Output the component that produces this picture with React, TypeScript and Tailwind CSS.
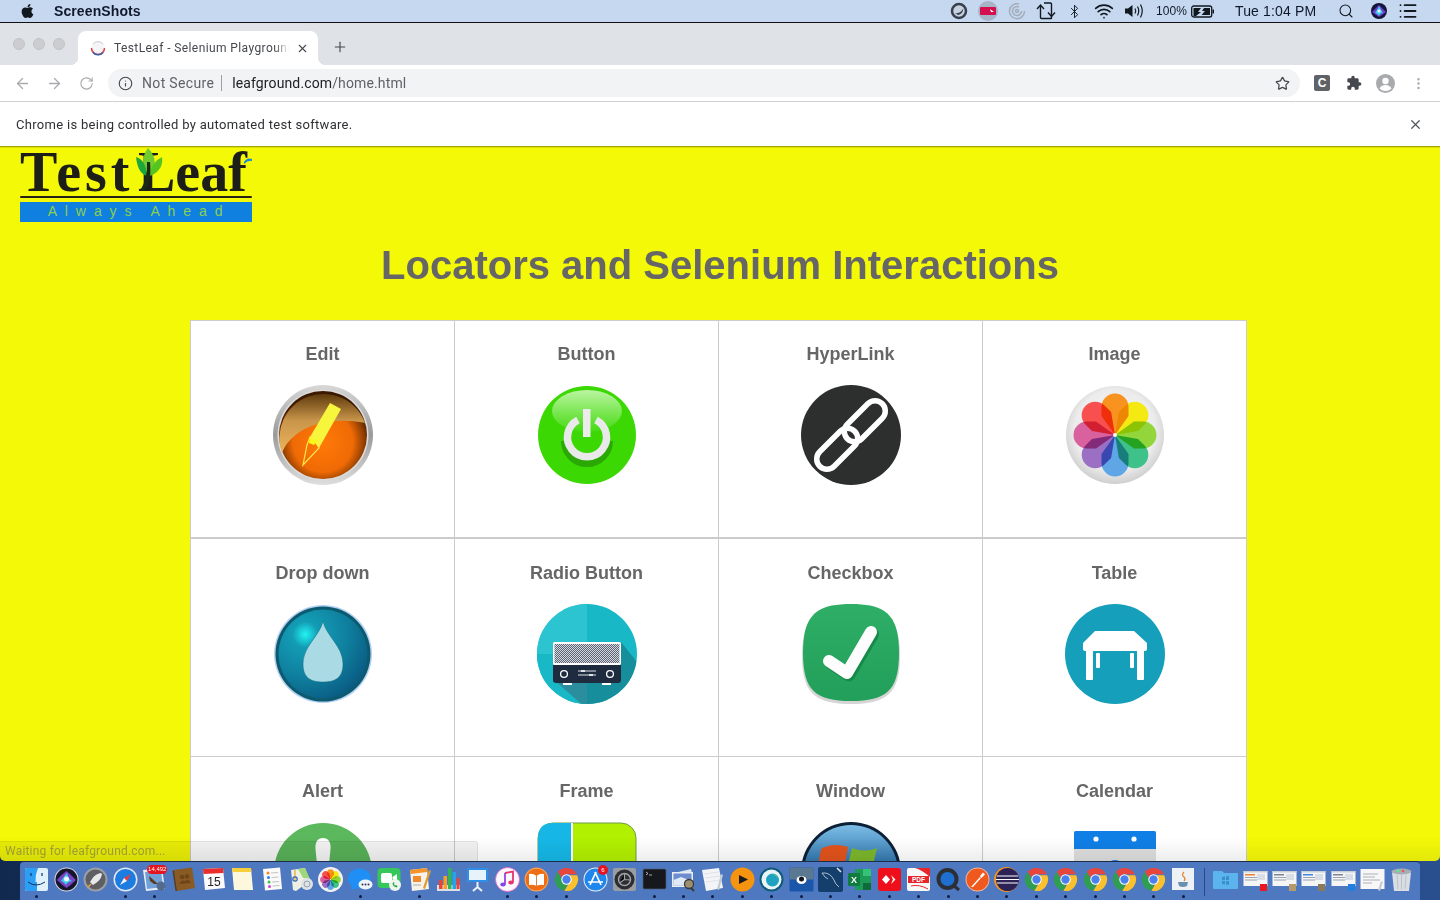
import React from "react";
import { ArrowLeft, ArrowRight, RotateCw, Info, Star, X, Plus, Search, Bluetooth, Wifi, EllipsisVertical, List } from "lucide-react";
import { FaApple } from "react-icons/fa";

const Petals = () => {
  const colors = ["#f7931e", "#f4e912", "#93d63c", "#3fc18a", "#5ea6e6", "#9a6fc4", "#d9619e", "#f7504f"];
  return (
    <g className="isolate">
      {colors.map((c, i) => (
        <path key={i} className="mix-blend-multiply" fill={c} transform={`rotate(${i * 45} 50 50)`} d="M50 50L36.500 31V22A13.500 13.500 0 0 1 63.500 22V31Z" />
      ))}
      <circle cx="50" cy="50" r="2" fill="#fff" />
    </g>
  );
};

const EditIcon = () => (
  <svg viewBox="0 0 100 100" className="w-[100px] h-[100px]">
    <defs>
      <linearGradient id="e1" x1="0" y1="0" x2="0" y2="1"><stop offset="0" stopColor="#d8d8d8" /><stop offset=".5" stopColor="#9a9a9a" /><stop offset="1" stopColor="#dedede" /></linearGradient>
      <radialGradient id="e2" cx=".5" cy=".58" r=".55"><stop offset="0" stopColor="#ff7a08" /><stop offset=".62" stopColor="#f06a05" /><stop offset=".86" stopColor="#8c3d02" /><stop offset="1" stopColor="#3c1a02" /></radialGradient>
      <linearGradient id="e3" x1="0" y1="0" x2="0" y2="1"><stop offset="0" stopColor="#5e3a0c" /><stop offset=".45" stopColor="#c8954a" /><stop offset="1" stopColor="#eeb45c" /></linearGradient>
    </defs>
    <circle cx="50" cy="50" r="50" fill="url(#e1)" />
    <circle cx="50" cy="50" r="45.500" fill="#dcdcdc" />
    <circle cx="50" cy="50" r="44" fill="url(#e2)" />
    <path d="M9 68C18 44 52 30 92 38A44 44 0 0 0 9 68Z" fill="url(#e3)" />
    <path d="M57 18L68 24L46 63L37 52Z" fill="#f7f53c" />
    <path d="M37 52L43 57L46 63L30 80L34 60Z" fill="none" stroke="#ffe94a" strokeWidth="1.200" />
    <path d="M37 52L42 56L46 52L41 60L36 58Z" fill="#f9fb10" />
  </svg>
);
const PowerIcon = () => (
  <svg viewBox="0 0 100 100" className="w-[100px] h-[100px]">
    <defs><linearGradient id="p1" x1="0" y1="0" x2="0" y2="1"><stop offset="0" stopColor="#baf5a0" /><stop offset="1" stopColor="#44da10" /></linearGradient></defs>
    <circle cx="50" cy="50" r="49" fill="#3cd803" />
    <ellipse cx="50" cy="26" rx="35" ry="21" fill="url(#p1)" />
    <path d="M28 56A22 22 0 0 0 72 56" fill="none" stroke="#2aa803" strokeWidth="8" />
    <path d="M41 35A19.500 19.500 0 1 0 59 35" fill="none" stroke="#e9e9e9" strokeWidth="7.500" />
    <rect x="46" y="24" width="7.500" height="28" fill="#ececec" />
  </svg>
);
const LinkIcon = () => (
  <svg viewBox="0 0 100 100" className="w-[100px] h-[100px]">
    <circle cx="50" cy="50" r="50" fill="#2d2f2e" />
    <g fill="none" stroke="#fff" strokeWidth="5.500">
      <rect x="-24.750" y="-10.250" width="49.500" height="20.500" rx="10.250" transform="translate(63.800 36.200) rotate(-45)" />
      <rect x="-24.750" y="-10.250" width="49.500" height="20.500" rx="10.250" transform="translate(36.200 63.800) rotate(-45)" />
    </g>
  </svg>
);
const PhotosIcon = () => (
  <svg viewBox="0 0 100 100" className="w-[100px] h-[100px]">
    <defs><radialGradient id="ph" cx=".5" cy=".45" r=".55"><stop offset="0" stopColor="#f7f7f7" /><stop offset=".75" stopColor="#ececec" /><stop offset="1" stopColor="#cfcfcf" /></radialGradient></defs>
    <circle cx="50" cy="50" r="49" fill="url(#ph)" />
    <Petals />
  </svg>
);
const DropIcon = () => (
  <svg viewBox="0 0 100 100" className="w-[100px] h-[100px]">
    <defs><radialGradient id="d1" cx=".3" cy=".28" r=".8"><stop offset="0" stopColor="#22f3f2" /><stop offset=".18" stopColor="#139cb5" /><stop offset=".6" stopColor="#0f7f9e" /><stop offset="1" stopColor="#0a5a82" /></radialGradient></defs>
    <circle cx="50" cy="50" r="49" fill="#b4d0f6" />
    <circle cx="50" cy="50" r="47.500" fill="#0c5a6e" />
    <circle cx="50" cy="50" r="44.500" fill="url(#d1)" />
    <path d="M50 17C53 32 70 42 70 60C70 74 62 78 50 78C38 78 30 74 30 60C30 42 47 32 50 17Z" fill="#aadbe4" stroke="#0c6a80" strokeWidth=".5" />
  </svg>
);
const RadioIcon = () => (
  <svg viewBox="0 0 100 100" className="w-[100px] h-[100px]">
    <defs>
      <pattern id="r1" width="2" height="2" patternUnits="userSpaceOnUse"><rect width="2" height="2" fill="#d4d7dc" /><rect width="1" height="1" fill="#5d6475" /><rect x="1" y="1" width="1" height="1" fill="#5d6475" /></pattern>
      <clipPath id="r2"><circle cx="50" cy="50" r="50" /></clipPath>
    </defs>
    <g clipPath="url(#r2)">
      <rect width="100" height="100" fill="#18b8c6" />
      <rect width="50" height="100" fill="#2cc4d1" />
      <rect y="50" width="50" height="50" fill="#18b8c6" />
      <path d="M84 38L100 58V100H50V79Z" fill="#178e9c" />
      <path d="M16 75L50 105V79Z" fill="#2a8e9e" />
    </g>
    <rect x="16" y="38" width="68" height="23" rx="1.500" fill="#fff" />
    <rect x="17.500" y="40" width="65" height="19" fill="url(#r1)" />
    <path d="M16 61H84V76Q84 79 81 79H19Q16 79 16 76Z" fill="#1f2c40" />
    <circle cx="27" cy="70" r="3.400" fill="none" stroke="#fff" strokeWidth="1.300" />
    <circle cx="73" cy="70" r="3.400" fill="none" stroke="#fff" strokeWidth="1.300" />
    <path d="M41 67H59M41 71H59" stroke="#dfe3e8" strokeWidth="1" />
    <rect x="44" y="66" width="4" height="2" fill="#dfe3e8" /><rect x="52" y="70" width="4" height="2" fill="#dfe3e8" />
    <rect x="26" y="79" width="9" height="2" fill="#fff" /><rect x="65" y="79" width="9" height="2" fill="#fff" />
  </svg>
);
const CheckIcon = () => (
  <svg viewBox="0 0 100 100" className="w-[100px] h-[100px]">
    <defs><linearGradient id="c1" x1="0" y1="0" x2="0" y2="1"><stop offset="0" stopColor="#2eae66" /><stop offset="1" stopColor="#229f5a" /></linearGradient></defs>
    <path d="M50 3C85 3 99 14 99 52C99 90 85 100 50 100C15 100 1 90 1 52C1 14 15 3 50 3Z" fill="#d5d5d5" />
    <path d="M50 0C85 0 98 11 98 49C98 87 85 97 50 97C15 97 2 87 2 49C2 11 15 0 50 0Z" fill="url(#c1)" />
    <path d="M29 58L47 70L71 29" fill="none" stroke="#178a49" strokeWidth="12" strokeLinecap="round" strokeLinejoin="round" transform="translate(1 1.500)" />
    <path d="M28 57L46 69L70 28" fill="none" stroke="#fdfdfd" strokeWidth="12" strokeLinecap="round" strokeLinejoin="round" />
  </svg>
);
const TableIcon = () => (
  <svg viewBox="0 0 100 100" className="w-[100px] h-[100px]">
    <circle cx="50" cy="50" r="50" fill="#159fbb" />
    <path d="M30 27H69L82 39V45Q82 47 80 47H20Q18 47 18 45V39Z" fill="#fff" />
    <path d="M21 46H28V75Q28 76 27 76H22Q21 76 21 75ZM72 46H79V75Q79 76 78 76H73Q72 76 72 75Z" fill="#fff" />
    <rect x="31" y="49" width="4" height="15" rx="1" fill="#fff" /><rect x="65" y="49" width="4" height="15" rx="1" fill="#fff" />
  </svg>
);
const AlertIcon = () => (
  <svg viewBox="0 0 100 100" className="w-[100px] h-[100px]">
    <circle cx="50" cy="50" r="49" fill="#5cb85c" />
    <path d="M50 16C56 16 58 21 57.500 27L54 62H46L42.500 27C42 21 44 16 50 16Z" fill="#fff" />
  </svg>
);
const FrameIcon = () => (
  <svg viewBox="0 0 100 100" className="w-[100px] h-[100px]">
    <rect x="1" y="1" width="98" height="98" rx="15" fill="#b1f000" stroke="#6f9a4a" strokeWidth="1" />
    <path d="M16 1H34V99H16Q1 99 1 84V16Q1 1 16 1Z" fill="#16b7e6" />
    <rect x="34" y="1" width="2" height="98" fill="#fff" />
  </svg>
);
const WindowsIcon = () => (
  <svg viewBox="0 0 100 100" className="w-[100px] h-[100px]">
    <defs><linearGradient id="w1" x1="0" y1="0" x2="0" y2="1"><stop offset="0" stopColor="#7dbde6" /><stop offset=".4" stopColor="#2f75ad" /><stop offset="1" stopColor="#174a7c" /></linearGradient></defs>
    <circle cx="50" cy="50" r="50" fill="#0c1f35" />
    <circle cx="50" cy="50" r="47" fill="url(#w1)" />
    <path d="M20 27Q32 20 47 25L44 42Q30 37 17 44Z" fill="#e2531c" />
    <path d="M51 26Q64 31 76 26L72 43Q60 47 47 43Z" fill="#7cb62b" />
  </svg>
);
const CalendarIcon = () => (
  <svg viewBox="0 0 100 100" className="w-[100px] h-[100px]">
    <rect x="9" y="9" width="82" height="82" fill="#dedede" />
    <path d="M9 11Q9 9 11 9H89Q91 9 91 11V27H9Z" fill="#0f7fe6" />
    <circle cx="31" cy="17" r="2.600" fill="#fff" /><circle cx="69" cy="17" r="2.600" fill="#fff" />
    <path d="M38 46Q50 30 62 46Z" fill="#0f7fe6" />
  </svg>
);

const ChromeLogo = ({ size = 25 }: { size?: number }) => (
  <svg viewBox="0 0 24 24" width={size} height={size}>
    <path d="M12 1A11 11 0 0 1 22 7H12A5 5 0 0 0 7.300 10.300L3.800 4.600A11 11 0 0 1 12 1Z" fill="#e8453c" />
    <path d="M3.500 4.800L8.500 13.500A5 5 0 0 0 13 17L9.800 22.800A11 11 0 0 1 3.500 4.800Z" fill="#2f9e50" />
    <path d="M22.300 8A11 11 0 0 1 10 22.900L15.500 13.500A5 5 0 0 0 15 8Z" fill="#fbc02d" />
    <circle cx="12" cy="12" r="5" fill="#fff" /><circle cx="12" cy="12" r="4" fill="#4a80ee" />
  </svg>
);
const Dk = ({ children }: { children: React.ReactNode }) => <svg viewBox="0 0 25 25" width={25} height={25}>{children}</svg>;

type DockItem = { node: React.ReactNode; dot?: boolean };
const Thumb = ({ a, b }: { a: string; b: string }) => (
  <Dk>
    <rect x=".5" y="4" width="24" height="15" fill="#f5f5f5" />
    <rect x=".5" y="4" width="24" height="1.500" fill="#c9ced6" />
    <rect x="2" y="7" width="10" height="1.500" fill={a} /><rect x="2" y="10" width="15" height="1" fill="#9aa4b2" /><rect x="2" y="12.500" width="12" height="1" fill="#9aa4b2" /><rect x="14" y="7" width="8" height="6" fill="#d8dde6" />
    <rect x="17" y="17" width="7" height="7" fill={b} />
  </Dk>
);
const dock: DockItem[] = [
  { dot: true, node: <Dk><rect x="1" y="1" width="23" height="23" rx="2" fill="#dff1fc" /><path d="M3 1H14Q11 8 11.500 15H13V24H3Q1 24 1 22V3Q1 1 3 1Z" fill="#2a9ff5" /><path d="M4 15Q12 21 21 15" fill="none" stroke="#17335c" strokeWidth="1" /><path d="M7 6V9M18 6V9" stroke="#17335c" strokeWidth="1.200" /></Dk> },
  { node: <Dk><circle cx="12.500" cy="12.500" r="12" fill="#d5d7db" /><circle cx="12.500" cy="12.500" r="11" fill="#15152c" /><path d="M3 13Q8 7 12.500 4Q17 8 22 13Q17 18 12.500 21Q8 18 3 13Z" fill="#7a43c4" /><path d="M7 14Q11 8 13 6Q14 12 18 14Q13 15 12 18Q10 15 7 14Z" fill="#38d1e0" /><circle cx="12.500" cy="12" r="2.500" fill="#f0f4ff" /></Dk> },
  { node: <Dk><circle cx="12.500" cy="12.500" r="12" fill="#9b9ea3" /><circle cx="12.500" cy="12.500" r="10" fill="#5d5f63" /><path d="M18 6Q12 7 9 12L7 15L10 18L13 16Q18 13 19 7Z" fill="#e8e8ea" /><path d="M8 17L5 20" stroke="#f3a23c" strokeWidth="1.500" /></Dk> },
  { dot: true, node: <Dk><circle cx="12.500" cy="12.500" r="12" fill="#dfe8f5" /><circle cx="12.500" cy="12.500" r="10.500" fill="#1d7ce0" /><path d="M18 7L11 11L14 14Z" fill="#ef3b36" /><path d="M7 18L11 11L14 14Z" fill="#f3f3f3" /></Dk> },
  { dot: true, node: <div className="relative w-[25px] h-[25px]"><Dk><path d="M1 3L20 1L23 22L4 24Z" fill="#e8eff8" /><path d="M3 5L19 3L21 20L5 22Z" fill="#6fa0d8" /><path d="M7 9L16 17L12 17L8 14Z" fill="#5b3a1e" /><circle cx="19" cy="19" r="4.500" fill="#536a8c" /></Dk><span className="absolute left-[5px] top-[-2px] h-[9px] px-[1px] rounded-full bg-[#e6141e] text-white text-[6px] leading-[9px] font-['Liberation_Sans',sans-serif] whitespace-nowrap">14,492</span></div> },
  { node: <Dk><path d="M3 3L21 0.500L24 21L6 24Z" fill="#8a5a24" /><path d="M3 3L6 24L4.500 24L1.500 4Z" fill="#5f3c14" /><circle cx="11" cy="10" r="2.300" fill="#6e4518" /><circle cx="16" cy="9.500" r="2.300" fill="#6e4518" /><path d="M8 17Q11 12 14 14Q18 11 20 16Z" fill="#6e4518" /></Dk> },
  { node: <Dk><path d="M2 2L22 1L24 21L4 23Z" fill="#fbfbfb" /><path d="M2 2L22 1L22.500 6L2.500 7Z" fill="#ea2e2b" /><text x="13" y="19" textAnchor="middle" fontSize="12" fontFamily="'Liberation Sans',sans-serif" fill="#222">15</text></Dk> },
  { node: <Dk><path d="M2 1H21L23 23H4Z" fill="#fdf8dd" /><path d="M2 1H21L21.400 5H2.400Z" fill="#f7cf3a" /></Dk> },
  { node: <Dk><path d="M3 2L20 0.500L22 22L5 23.500Z" fill="#fafafa" /><circle cx="8" cy="6" r="1.500" fill="#f58a1f" /><circle cx="8.500" cy="10.500" r="1.500" fill="#2c7df0" /><circle cx="9" cy="15" r="1.500" fill="#3bc04f" /><circle cx="9.500" cy="19.500" r="1.500" fill="#d23fd0" /><path d="M11 6L18 5.500M11.500 10.500L18.500 10M12 15L19 14.500M12.500 19L19.500 18.500" stroke="#aaa" strokeWidth=".7" /></Dk> },
  { node: <Dk><path d="M2 3L16 1L21 14L7 24L4 23Z" fill="#eef0e4" /><path d="M9 2L16 1L21 12L14 11Z" fill="#9fd77a" /><path d="M6 3V14" stroke="#e9b93c" strokeWidth="1.500" /><circle cx="6" cy="12" r="2.200" fill="none" stroke="#2c62c4" strokeWidth="1.200" /><circle cx="18" cy="17" r="6" fill="#dfe3e8" /><circle cx="18" cy="17" r="3" fill="none" stroke="#98a1ad" strokeWidth="1" /></Dk> },
  { node: <svg viewBox="0 0 100 100" width={25} height={25}><circle cx="50" cy="50" r="50" fill="#f2f2f2" /><Petals /></svg> },
  { dot: true, node: <Dk><ellipse cx="11.500" cy="11.500" rx="11.500" ry="10" fill="#1f8ff5" /><path d="M4 18L3 23Q8 22 10 20Z" fill="#1f8ff5" /><ellipse cx="17.500" cy="17.500" rx="7" ry="5" fill="#eef3fa" /><circle cx="14.500" cy="17.500" r="1" fill="#335" /><circle cx="17.500" cy="17.500" r="1" fill="#335" /><circle cx="20.500" cy="17.500" r="1" fill="#335" /></Dk> },
  { node: <Dk><rect x="0.500" y="1" width="23" height="20" rx="4" fill="#35c75a" /><rect x="4" y="6" width="11" height="10" rx="2" fill="#fff" /><path d="M15.500 10L20 7V15L15.500 12Z" fill="#fff" /><circle cx="18" cy="18" r="6" fill="#eef4ee" /><path d="M15.500 16.500Q16 20 20 20.500L20.500 19L19 18L18 18.500L17 17.500L17.500 16L16.500 15Z" fill="#2da84d" /></Dk> },
  { dot: true, node: <Dk><path d="M3 3L20 1L22 22L5 24Z" fill="#f7f3ea" /><path d="M3 3L20 1L20.400 5L3.400 7Z" fill="#f4952a" /><rect x="6" y="9" width="8" height="6" fill="#ef8b2c" /><path d="M22 3L24 4L18 22L16 21Z" fill="#e39a2f" /><path d="M6 18H14" stroke="#aaa" strokeWidth="1" /></Dk> },
  { node: <Dk><rect x="1" y="18" width="23" height="6" fill="#dcdfe4" /><rect x="3" y="13" width="3.500" height="9" fill="#ef4136" /><rect x="7.500" y="9" width="3.500" height="13" fill="#f5a31f" /><rect x="12" y="1" width="3.500" height="21" fill="#2fb757" /><rect x="16.500" y="5" width="3.500" height="17" fill="#25a4e8" /><rect x="20.500" y="11" width="3" height="11" fill="#ef4136" /></Dk> },
  { node: <Dk><rect x="2" y="1" width="21" height="14" rx="1" fill="#2e8fe8" /><rect x="4" y="3" width="17" height="10" fill="#e8f2fb" /><path d="M12.500 15V21M8 24L12.500 20L17 24" stroke="#eef1f5" strokeWidth="2" fill="none" /></Dk> },
  { dot: true, node: <Dk><circle cx="12.500" cy="12.500" r="12" fill="#fbf7fa" /><circle cx="12.500" cy="12.500" r="12" fill="none" stroke="#e85ac0" strokeWidth=".8" /><path d="M10 6L18 4.500V15" stroke="#e9336e" strokeWidth="1.800" fill="none" /><path d="M10 6V17" stroke="#9a42e6" strokeWidth="1.800" /><ellipse cx="8" cy="17.500" rx="2.700" ry="2" fill="#7b49ea" /><ellipse cx="16" cy="15.500" rx="2.700" ry="2" fill="#e9336e" /></Dk> },
  { dot: true, node: <Dk><circle cx="12.500" cy="12.500" r="12" fill="#f8a35a" /><circle cx="12.500" cy="12.500" r="10.800" fill="#ef6d13" /><path d="M5 7Q9 6 12.500 9Q16 6 20 7V18Q16 17 12.500 19Q9 17 5 18Z" fill="#fff" /><path d="M12.500 9V19" stroke="#c6642a" strokeWidth=".8" /></Dk> },
  { dot: true, node: <ChromeLogo /> },
  { node: <div className="relative w-[25px] h-[25px]"><Dk><circle cx="12.500" cy="12.500" r="12" fill="#e8f1fb" /><circle cx="12.500" cy="12.500" r="11" fill="#1f86ee" /><path d="M13 5L7 18M12 5L18 18M5 15H20" stroke="#fff" strokeWidth="1.700" /></Dk><span className="absolute left-[15px] top-[-2px] w-[10px] h-[10px] rounded-full bg-[#e6141e] text-white text-[6px] leading-[10px] text-center font-['Liberation_Sans',sans-serif]">6</span></div> },
  { node: <Dk><rect x="1" y="1" width="23" height="23" rx="2" fill="#9a9da1" /><circle cx="12.500" cy="12.500" r="10" fill="#2c2d30" /><circle cx="12.500" cy="12.500" r="6" fill="none" stroke="#9fa2a6" strokeWidth="1.500" /><path d="M12.500 6.500V12.500L7.500 16M12.500 12.500L18 13" stroke="#9fa2a6" strokeWidth="1.200" /></Dk> },
  { dot: true, node: <Dk><rect x="1" y="2" width="23" height="20" rx="1.500" fill="#16181b" stroke="#4c5d77" strokeWidth=".7" /><path d="M4 5L6 6.500L4 8M7 8H10" stroke="#e8e8e8" strokeWidth=".7" fill="none" /></Dk> },
  { dot: true, node: <Dk><path d="M3 6L20 2L22 10L5 14Z" fill="#d9e7f2" /><rect x="1" y="5" width="21" height="15" fill="#eaeef3" /><rect x="2.500" y="6.500" width="18" height="12" fill="#6c8ed0" /><path d="M2.500 13L10 10L20.500 14V18.500H2.500Z" fill="#dfeaf6" /><circle cx="18" cy="17" r="4.500" fill="#9d8f72" stroke="#3c3a34" strokeWidth="1.300" /><path d="M20 21L23 24" stroke="#3c3a34" strokeWidth="2" /></Dk> },
  { dot: true, node: <Dk><path d="M2 3L19 1L23 21L6 24Z" fill="#f2f4f6" /><path d="M4 7L19 5M5 11L20 9M6 15L21 13" stroke="#ccd1d6" strokeWidth=".5" /><path d="M21 7L23 8L19 23L17 22Z" fill="#c5cbd2" /></Dk> },
  { dot: true, node: <Dk><circle cx="12.500" cy="12.500" r="12" fill="#f6930f" /><path d="M9 8L18 12.500L9 17Z" fill="#1c1c1c" /></Dk> },
  { dot: true, node: <Dk><circle cx="12.500" cy="12.500" r="12" fill="#0f5a7a" /><circle cx="12.500" cy="12.500" r="10" fill="#e8f4f5" /><circle cx="13.500" cy="13" r="6.500" fill="#1fa2c2" /><path d="M12 7A6 6 0 0 1 19 13A7 7 0 0 0 12 7Z" fill="#7ecf5a" /></Dk> },
  { dot: true, node: <Dk><rect x="0.500" y="0.500" width="24" height="24" rx="1" fill="#1a57ab" /><rect x="0.500" y="0.500" width="24" height="12" fill="#5a7892" /><ellipse cx="12.500" cy="13" rx="5" ry="4" fill="#fff" /><circle cx="12.500" cy="12" r="2.500" fill="#10151f" /></Dk> },
  { dot: true, node: <Dk><rect x="0" y="0" width="25" height="25" rx="2" fill="#143e6c" /><path d="M4 6Q12 5 16 13Q17 17 21 20M4 6Q7 11 10 12" fill="none" stroke="#cfdde9" strokeWidth=".8" /><path d="M19 1L23 5" stroke="#e8eef4" strokeWidth="1.500" /></Dk> },
  { dot: true, node: <Dk><rect x="8" y="2" width="16" height="21" rx="1" fill="#1e9a57" /><rect x="16" y="2" width="8" height="7" fill="#35c277" /><rect x="16" y="16" width="8" height="7" fill="#0e6b3a" /><rect x="1" y="6" width="12" height="13" rx="1" fill="#107c41" /><text x="7" y="16" textAnchor="middle" fontSize="9" fontWeight="700" fontFamily="'Liberation Sans',sans-serif" fill="#fff">X</text></Dk> },
  { dot: true, node: <Dk><rect x="1" y="1" width="23" height="23" rx="3" fill="#ee0f1a" /><path d="M9 8L13 12.500L9 17L5 12.500Z" fill="#fff" /><path d="M14 8L18.500 12.500L14 17L16 12.500Z" fill="#fff" /></Dk> },
  { dot: true, node: <Dk><rect x="1" y="1" width="23" height="23" rx="2" fill="#f8f8f8" /><path d="M9 1H24V10Q16 3 9 1Z" fill="#e6262b" /><rect x="2" y="9" width="21" height="7" fill="#e6262b" /><text x="12.500" y="15" textAnchor="middle" fontSize="6.500" fontWeight="700" fontFamily="'Liberation Sans',sans-serif" fill="#fff">PDF</text><path d="M5 19Q13 17 22 22" stroke="#e6262b" strokeWidth="1" fill="none" /></Dk> },
  { dot: true, node: <Dk><circle cx="11.500" cy="12" r="9" fill="#1e6fd0" stroke="#2c3036" strokeWidth="4" /><path d="M17 18L23 23" stroke="#2c3036" strokeWidth="3" /></Dk> },
  { dot: true, node: <Dk><circle cx="12.500" cy="12.500" r="12" fill="#f2b49c" /><circle cx="12.500" cy="12.500" r="11" fill="#f0591d" /><path d="M6 20L15 10L16 11L8 20ZM15 9L18 5.500L20 7.500L16.500 11Z" fill="#fff" /></Dk> },
  { dot: true, node: <Dk><circle cx="12.500" cy="12.500" r="12.500" fill="#f7941e" /><circle cx="13.500" cy="12.500" r="11.500" fill="#2c2255" /><path d="M3 9H24M2 12.500H25M3 16H24" stroke="#fff" strokeWidth="1.200" /></Dk> },
  { dot: true, node: <ChromeLogo /> },
  { dot: true, node: <ChromeLogo /> },
  { dot: true, node: <ChromeLogo /> },
  { dot: true, node: <ChromeLogo /> },
  { dot: true, node: <ChromeLogo /> },
  { dot: true, node: <Dk><rect x="1" y="1" width="22" height="22" fill="#eef2f5" /><path d="M13 5Q10 8 13 10Q15 12 13 14" stroke="#e77f28" strokeWidth="1.200" fill="none" /><path d="M7 15H17L16 19Q12 21 8 19Z" fill="#6a8fb0" /></Dk> },
];
const dockRight: React.ReactNode[] = [
  <Dk><path d="M0 5Q0 4 1 4H9L11 6H24Q25 6 25 7V21Q25 22 24 22H1Q0 22 0 21Z" fill="#5cb4ee" /><path d="M9 10L12 9.500V13H9ZM13 9.300L16 9V13H13ZM9 14H12V17.500L9 17ZM13 14H16V18L13 17.600Z" fill="#3d8fcb" /></Dk>,
  <Thumb a="#f08030" b="#ea1620" />,
  <Thumb a="#7a8494" b="#b79a6a" />,
  <Thumb a="#3b87dd" b="#8a7a5a" />,
  <Thumb a="#7a8494" b="#1f80e0" />,
  <Dk><rect x="0.500" y="2" width="24" height="20" fill="#f7f7f7" /><path d="M3 7H18M3 10H15M3 13H20M3 16H12" stroke="#9aa0a8" strokeWidth=".8" /><path d="M21 14L23 15L20 24L18 23Z" fill="#c8ccd2" /></Dk>,
  <Dk><path d="M3 5H22L20 24H5Z" fill="#d9dee4" /><ellipse cx="12.500" cy="4.500" rx="10" ry="3" fill="#a6adb5" /><circle cx="9" cy="4" r="1.200" fill="#4f7" /><circle cx="14" cy="4" r="1.200" fill="#e55" /><path d="M8 8L9 22M12.500 8V22M17 8L16 22" stroke="#b4bac1" strokeWidth=".8" /></Dk>,
];

const cells: { title: string; icon: React.ReactNode; row: number }[] = [
  { title: "Edit", icon: <EditIcon />, row: 1 },
  { title: "Button", icon: <PowerIcon />, row: 1 },
  { title: "HyperLink", icon: <LinkIcon />, row: 1 },
  { title: "Image", icon: <PhotosIcon />, row: 1 },
  { title: "Drop down", icon: <DropIcon />, row: 2 },
  { title: "Radio Button", icon: <RadioIcon />, row: 2 },
  { title: "Checkbox", icon: <CheckIcon />, row: 2 },
  { title: "Table", icon: <TableIcon />, row: 2 },
  { title: "Alert", icon: <AlertIcon />, row: 3 },
  { title: "Frame", icon: <FrameIcon />, row: 3 },
  { title: "Window", icon: <WindowsIcon />, row: 3 },
  { title: "Calendar", icon: <CalendarIcon />, row: 3 },
];
const rowClass: Record<number, string> = {
  1: "h-[217px] border-t pt-[20px]",
  2: "h-[219px] border-t-2 pt-[21px]",
  3: "h-[218px] border-t pt-[21px]",
};

const Mi = ({ children, w = "w-[29px]" }: { children: React.ReactNode; w?: string }) => <div className={`${w} flex items-center justify-center shrink-0`}>{children}</div>;

export default function App() {
  return (
    <div className="w-[1440px] h-[900px] overflow-hidden flex flex-col bg-gradient-to-r from-[#12294f] to-[#2a4f8e] font-['Liberation_Sans',sans-serif]">
      {/* menu bar */}
      <div className="h-[23px] shrink-0 bg-[#c6d8f0] border-b border-[#111] flex items-center text-[#10182a]">
        <FaApple className="ml-[20px] w-[15px] h-[16px] text-[#111820]" />
        <span className="ml-[19px] text-[14px] font-bold tracking-[0.1px]">ScreenShots</span>
        <div className="ml-auto flex items-center h-full">
          <Mi><svg width="18" height="18" viewBox="0 0 18 18"><circle cx="9" cy="9" r="7" fill="#c7d2e0" stroke="#39404c" strokeWidth="2.500" /><path d="M5 11Q11 12 13.500 6Q13 12 8 13Z" fill="#39404c" /></svg></Mi>
          <Mi><svg width="20" height="20" viewBox="0 0 20 20"><circle cx="10" cy="10" r="10" fill="#a7b3c6" /><rect x="2" y="6" width="16" height="8" rx="1" fill="#d40f4f" /><path d="M12 8L16 11L13 11Z" fill="#fff" /></svg></Mi>
          <Mi><svg width="18" height="18" viewBox="0 0 18 18" fill="none" stroke="#a3adba" strokeWidth="1.500"><path d="M11 2A7.500 7.500 0 1 0 16.500 9" /><path d="M11 5A4.500 4.500 0 1 0 13.500 9" /><circle cx="9" cy="9" r="1.500" /></svg></Mi>
          <Mi><svg width="20" height="18" viewBox="0 0 20 18" fill="none" stroke="#111820" strokeWidth="1.400"><path d="M1 7L4.500 3L8 7M4.500 3.500V15.500Q4.500 16.500 5.500 16.500H15Q15.500 16.500 15.500 16V2.500Q15.500 1 14.500 1H8" /><path d="M12 10.500L15.500 14.500L19 10.500" /></svg></Mi>
          <Mi><Bluetooth size={15} strokeWidth={1.5} className="text-[#111820]" /></Mi>
          <Mi><Wifi size={20} strokeWidth={2} className="text-[#111820]" /></Mi>
          <Mi w="w-[32px]"><svg width="21" height="16" viewBox="0 0 21 16" fill="none" stroke="#111820" strokeWidth="1.200"><path d="M1 5.500H4L8.500 2V14L4 10.500H1Z" fill="#111820" stroke="none" /><path d="M11 5.500Q12.500 8 11 10.500M13.500 3.500Q16 8 13.500 12.500M16.500 1.500Q20 8 16.500 14.500" /></svg></Mi>
          <span className="ml-[6px] text-[12px] w-[34px] tracking-[0.1px]">100%</span>
          <svg className="ml-[1px]" width="24" height="13" viewBox="0 0 24 13"><rect x=".7" y="1" width="20" height="11" rx="2" fill="none" stroke="#111820" strokeWidth="1.300" /><rect x="21.500" y="4.500" width="1.500" height="4" fill="#111820" /><path d="M2.500 3H10L7 7H10L5 11H2.500ZM13 3H19V10H10.500L14 6H11Z" fill="#111820" /></svg>
          <span className="ml-[20px] w-[80px] text-[14px] whitespace-nowrap tracking-[0.15px]">Tue 1:04 PM</span>
          <Mi w="w-[31px] ml-[15px]"><Search size={16} strokeWidth={1.6} className="text-[#111820]" /></Mi>
          <Mi w="w-[35px]"><svg width="16" height="16" viewBox="0 0 16 16"><circle cx="8" cy="8" r="8" fill="#15153a" /><path d="M1 9Q5 5 8 2Q11 5 15 9Q11 12 8 14Q5 12 1 9Z" fill="#6c3fd0" /><path d="M4 10Q7 6 8 3Q10 7 12 10Q9 10 8 13Q6 10 4 10Z" fill="#3fd0e6" /><circle cx="8" cy="8" r="1.500" fill="#f4f0ff" /></svg></Mi>
          <Mi w="w-[24px] mr-[20px]"><List size={20} strokeWidth={2.2} className="text-[#111820]" /></Mi>
        </div>
      </div>

      {/* browser */}
      <div className="h-[838px] shrink-0 overflow-hidden rounded-b-[5px] flex flex-col relative">
        <div className="h-[42px] shrink-0 bg-[#dfe2e7] flex items-end relative">
          <div className="flex gap-[8px] ml-[13px] mb-[15px]">
            <span className="w-[12px] h-[12px] rounded-full bg-[#cbcdd0] border border-[#c1c3c6]" />
            <span className="w-[12px] h-[12px] rounded-full bg-[#cbcdd0] border border-[#c1c3c6]" />
            <span className="w-[12px] h-[12px] rounded-full bg-[#cbcdd0] border border-[#c1c3c6]" />
          </div>
          <div className="ml-[13px] w-[240px] h-[34px] bg-white rounded-t-[8px] flex items-center relative">
            <span className="absolute left-[-8px] bottom-0 w-[8px] h-[8px] bg-[radial-gradient(circle_at_0_0,transparent_8px,#ffffff_8.5px)]" />
            <span className="absolute right-[-8px] bottom-0 w-[8px] h-[8px] bg-[radial-gradient(circle_at_100%_0,transparent_8px,#ffffff_8.5px)]" />
            <svg className="ml-[12px]" width="16" height="16" viewBox="0 0 16 16"><circle cx="8" cy="8" r="7" fill="#f5f5f8" /><path d="M1.500 8A6.500 6.500 0 0 0 14.500 8" fill="none" stroke="#d94448" strokeWidth="1.500" /><path d="M3 12.500A6.500 6.500 0 0 0 13 12.500" fill="none" stroke="#3a5fa8" strokeWidth="1.500" /><path d="M3 4A6.500 6.500 0 0 1 13 4" fill="none" stroke="#c8c8d2" strokeWidth="1" /></svg>
            <span className="ml-[8px] w-[175px] relative overflow-hidden whitespace-nowrap text-[12px] text-[#45484d] font-['Roboto',sans-serif] tracking-[0.4px]">
              TestLeaf - Selenium Playground
              <span className="absolute right-0 top-0 h-full w-[14px] bg-gradient-to-r from-transparent to-white" />
            </span>
            <X size={13} strokeWidth={2} className="ml-[7px] text-[#45484d]" />
          </div>
          <Plus size={16} strokeWidth={1.7} className="ml-[14px] mb-[10px] text-[#45484d]" />
        </div>

        <div className="h-[36px] shrink-0 bg-white flex items-center">
          <ArrowLeft size={17} strokeWidth={1.8} className="ml-[14px] text-[#a8aaad]" />
          <ArrowRight size={17} strokeWidth={1.8} className="ml-[15px] text-[#a8aaad]" />
          <RotateCw size={15} strokeWidth={1.8} className="ml-[16px] text-[#a8aaad]" />
          <div className="ml-[14px] w-[1192px] h-[28px] rounded-full bg-[#f1f3f4] flex items-center">
            <Info size={15} strokeWidth={1.8} className="ml-[10px] text-[#45484d]" />
            <span className="ml-[9px] text-[14px] text-[#5f6368] font-['Roboto',sans-serif] tracking-[0.33px]">Not Secure</span>
            <span className="ml-[7px] w-px h-[16px] bg-[#9aa0a6]" />
            <span className="ml-[10px] text-[14px] text-[#202124] font-['Roboto',sans-serif] tracking-[0.13px]">leafground.com<span className="text-[#5f6368]">/home.html</span></span>
            <Star size={15} strokeWidth={2} className="ml-auto mr-[10px] text-[#45484d]" />
          </div>
          <div className="ml-[14px] w-[16px] h-[16px] rounded-[2px] bg-[#5f6368] text-white text-[12px] font-bold flex items-center justify-center">C</div>
          <svg className="ml-[16px]" width="16" height="16" viewBox="0 0 24 24" fill="#45484d"><path d="M20.500 11H19V7c0-1.100-.9-2-2-2h-4V3.500C13 2.120 11.880 1 10.500 1S8 2.120 8 3.500V5H4c-1.100 0-1.990.9-1.990 2v3.800H3.500c1.490 0 2.700 1.210 2.700 2.700s-1.210 2.700-2.700 2.700H2V20c0 1.100.9 2 2 2h3.800v-1.500c0-1.490 1.210-2.700 2.700-2.700 1.490 0 2.700 1.210 2.700 2.700V22H17c1.100 0 2-.9 2-2v-4h1.500c1.380 0 2.500-1.120 2.500-2.500S21.880 11 20.500 11z" /></svg>
          <svg className="ml-[14px]" width="19" height="19" viewBox="0 0 19 19"><circle cx="9.500" cy="9.500" r="9.500" fill="#a8aaad" /><circle cx="9.500" cy="7" r="3.200" fill="#fff" /><path d="M3.500 14.500Q5 11 9.500 11Q14 11 15.500 14.500Q13 17 9.500 17Q6 17 3.500 14.500Z" fill="#fff" /></svg>
          <EllipsisVertical size={15} strokeWidth={2} className="ml-[16px] text-[#a8aaad]" />
        </div>
        <div className="h-px shrink-0 bg-[#cfd1d4]" />

        <div className="h-[44px] shrink-0 bg-white flex items-center pl-[16px] pr-[17px] text-[13px] text-[#2f3033] font-['Roboto',sans-serif]">
          <span className="tracking-[0.3px] pt-[1px]">Chrome is being controlled by automated test software.</span>
          <X size={15} strokeWidth={2} className="ml-auto text-[#55585c]" />
        </div>

        <div className="flex-1 min-h-0 bg-[#f4f908] overflow-hidden relative">
          <div className="absolute inset-x-0 top-0 h-[2px] bg-gradient-to-b from-[#8c8c00] to-transparent" />
          {/* logo */}
          <div className="ml-[20px] mt-[4px] w-[232px] h-[72px] relative">
            <span className="block absolute left-0 top-[-6px] text-[56px] leading-[56px] font-bold font-['Liberation_Serif',serif] text-[#1e1e18] whitespace-nowrap tracking-[4px]">Test</span>
            <span className="block absolute left-[118px] top-[-6px] text-[56px] leading-[56px] font-bold font-['Liberation_Serif',serif] text-[#1e1e18] whitespace-nowrap tracking-[0px]">Leaf</span>
            <svg className="absolute left-[110px] top-[-3px]" width="36" height="48" viewBox="0 0 36 46"><path d="M18 0Q27 8 24 22Q20 30 16 24Q10 10 18 0Z" fill="#6fcc2c" /><path d="M6 9Q16 12 17 28Q8 26 6 9Z" fill="#1da63a" /><path d="M32 9Q34 22 20 28Q21 14 32 9Z" fill="#56c41f" /><path d="M17 14Q18 30 10 43H14Q22 36 20 14Z" fill="#1a2a14" /></svg>
            <svg className="absolute left-[224px] top-[8px]" width="8" height="6" viewBox="0 0 8 6"><path d="M0 4Q3 -1 8 1V3Q4 2 0 6Z" fill="#1686d8" /></svg>
            <div className="absolute left-0 top-[46px] w-full h-[2px] bg-[#23231a] rounded-full" />
            <div className="absolute left-0 top-[52px] w-full h-[20px] bg-[#0f80df] text-center pl-[6px] text-[14px] leading-[19px] text-[#8ccf4e] tracking-[7.900px] whitespace-nowrap">Always Ahead</div>
          </div>
          <h1 className="mt-[20px] h-[46px] text-center text-[40px] leading-[46px] font-bold text-[#666666]">Locators and Selenium Interactions</h1>
          <div className="mt-[32px] ml-[190px] w-[1057px] grid grid-cols-[repeat(4,264px)] bg-white border-r border-[#cccccc] text-[#666666]">
            {cells.map((c) => (
              <div key={c.title} className={`border-l border-[#cccccc] flex flex-col items-center ${rowClass[c.row]}`}>
                <h3 className="h-[26px] text-[18px] leading-[26px] font-bold">{c.title}</h3>
                <div className="mt-[18px] w-[100px] h-[100px]">{c.icon}</div>
              </div>
            ))}
          </div>
          <div className="absolute inset-x-0 bottom-0 h-[24px] bg-gradient-to-b from-transparent to-[#00000012]" />
          <div className="absolute left-0 bottom-0 w-[478px] h-[20px] bg-[#0000000d] border-t border-r border-[#00000012] rounded-tr-[3px] pl-[5px] text-[12px] leading-[19px] text-[#6e6e4e99] font-['Roboto',sans-serif] tracking-[0.2px]">Waiting for leafground.com...</div>
        </div>
      </div>

      {/* dock */}
      <div className="ml-[20px] w-[1400px] h-[39px] shrink-0 bg-[#4e78c0] rounded-t-[4px] flex pl-[2.3px] border-t border-[#1d2c4a]">
        {dock.map((d, i) => (
          <div key={i} className="w-[29.4px] shrink-0 flex flex-col items-center pt-[5px]">
            <div className="w-[25px] h-[25px]">{d.node}</div>
            {d.dot && <span className="mt-[3px] w-[3px] h-[3px] rounded-full bg-[#0d1d3f]" />}
          </div>
        ))}
        <div className="w-[13px] shrink-0 flex justify-center pt-[6px]"><span className="w-px h-[28px] bg-[#2a4a86]" /></div>
        {dockRight.map((n, i) => (
          <div key={i} className="w-[29.4px] shrink-0 flex flex-col items-center pt-[5px]">
            <div className="w-[25px] h-[25px]">{n}</div>
          </div>
        ))}
      </div>
    </div>
  );
}
